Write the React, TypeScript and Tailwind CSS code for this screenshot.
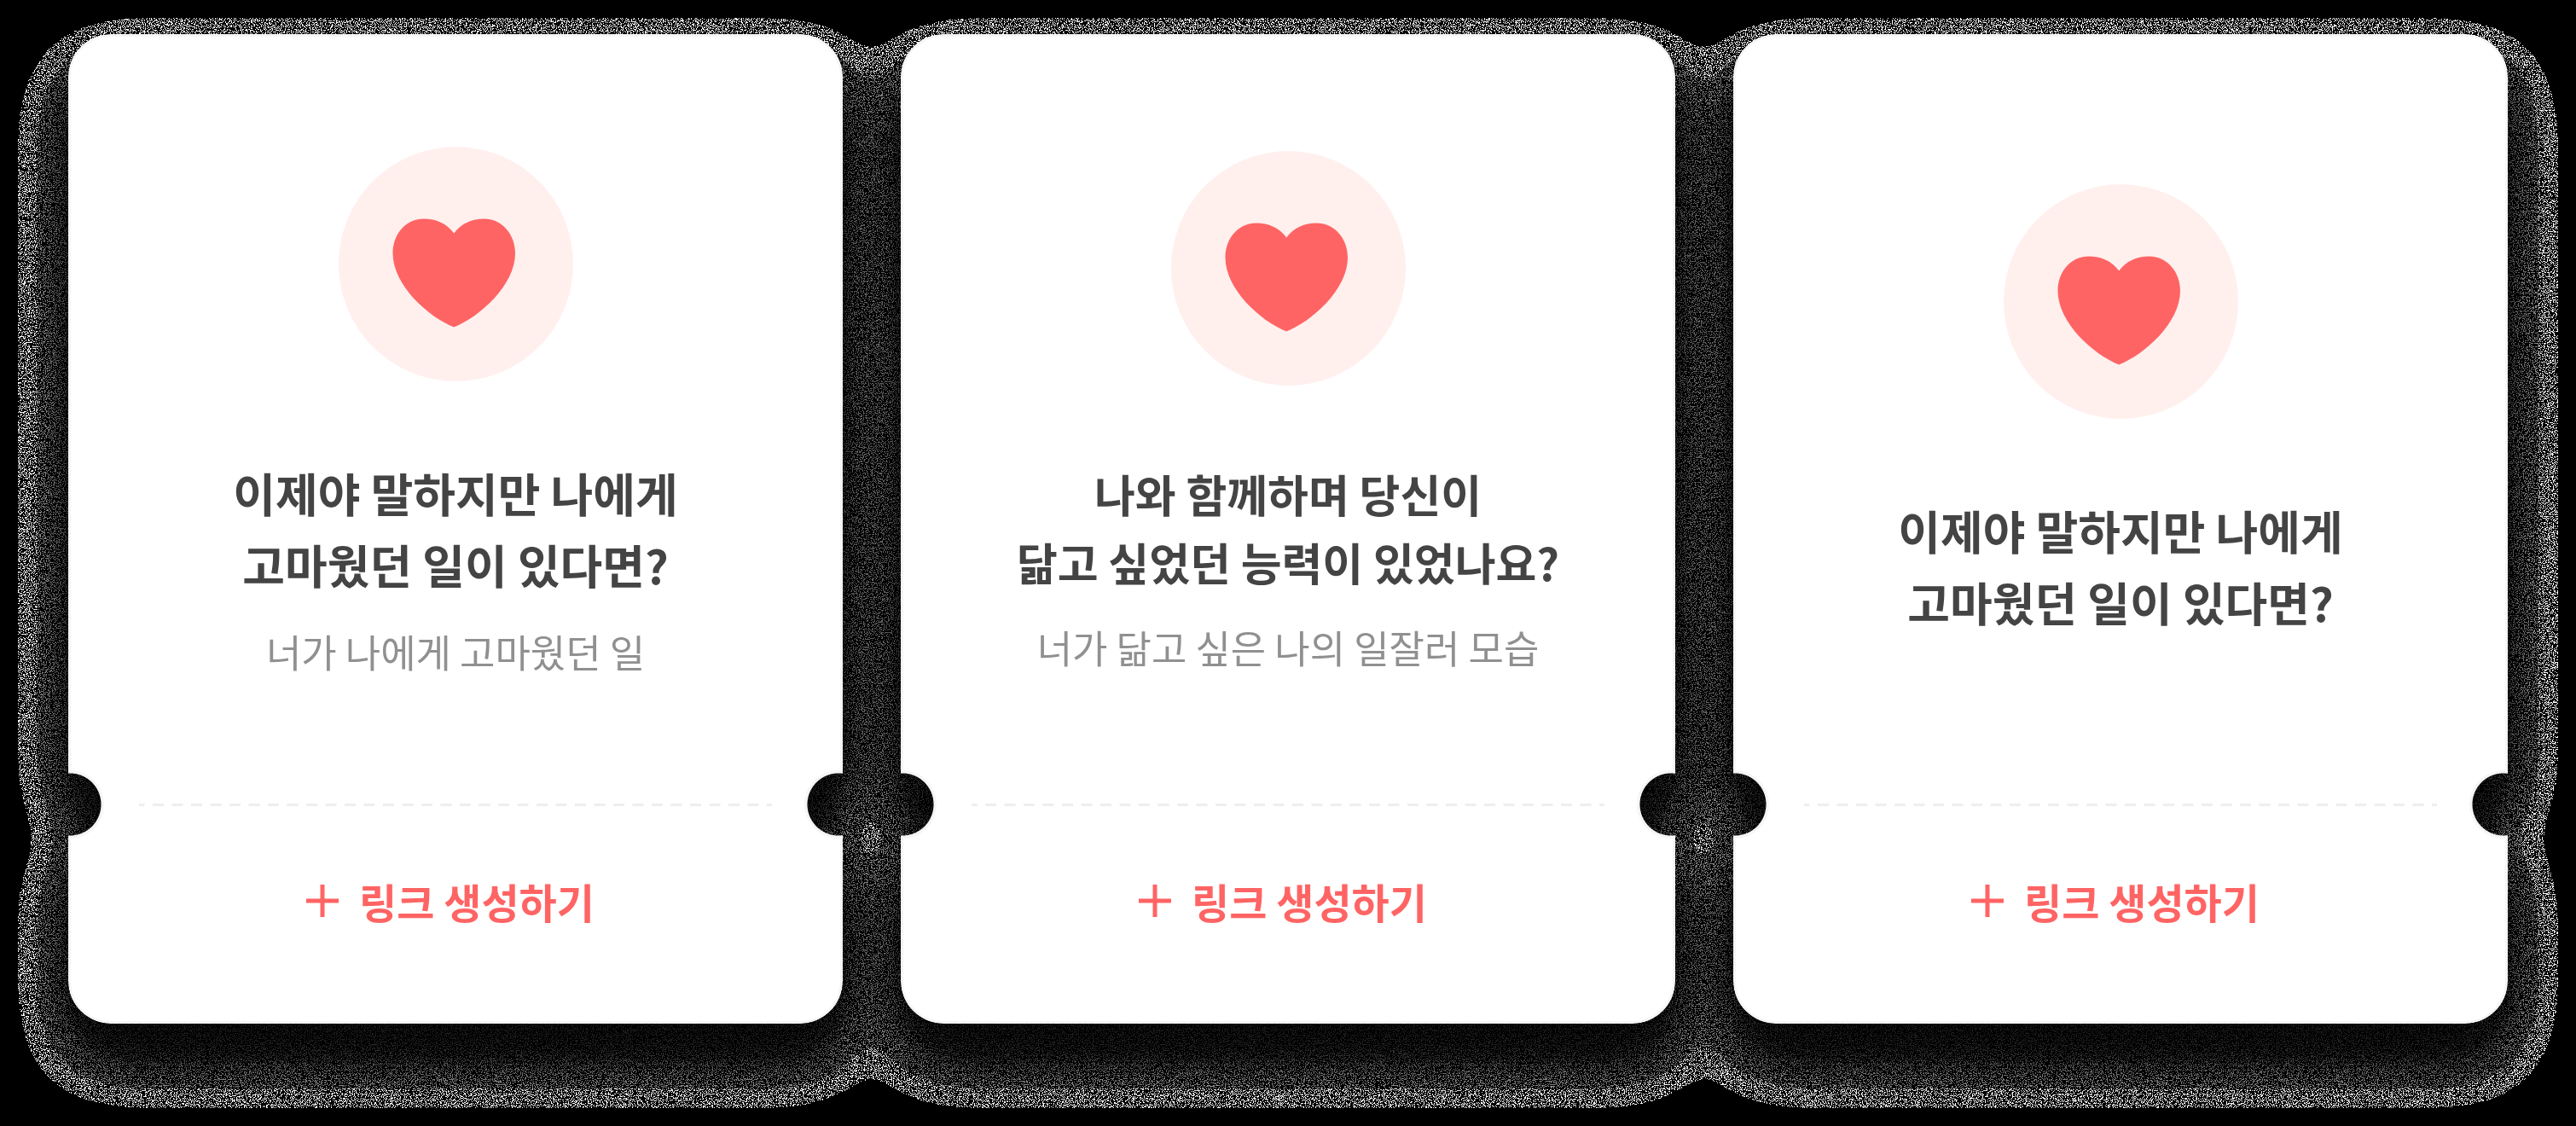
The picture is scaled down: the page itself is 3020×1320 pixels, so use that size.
type Ticket = {
  id: string;
  title: [string, string];
  titleClass: string;
  caption?: string;
};

const tickets: Ticket[] = [
  {
    id: "thanks",
    title: ["이제야 말하지만 나에게", "고마웠던 일이 있다면?"],
    titleClass: "mt-[89px] text-[54px] leading-[84px]",
    caption: "너가 나에게 고마웠던 일",
  },
  {
    id: "ability",
    title: ["나와 함께하며 당신이", "닮고 싶었던 능력이 있었나요?"],
    titleClass: "mt-[87px] text-[52px] leading-[80px]",
    caption: "너가 닮고 싶은 나의 일잘러 모습",
  },
  {
    id: "thanks-short",
    title: ["이제야 말하지만 나에게", "고마웠던 일이 있다면?"],
    titleClass: "mt-[89px] text-[54px] leading-[84px]",
  },
];

/* Soft shadow rendered as speckles that get brighter as the shadow fades out. */
function GrainFilter() {
  return (
    <svg className="absolute size-0" aria-hidden="true">
      <filter
        id="grain"
        x="-5%"
        y="-10%"
        width="110%"
        height="125%"
        colorInterpolationFilters="sRGB"
      >
        <feOffset in="SourceAlpha" dy="40" result="shifted" />
        <feGaussianBlur in="shifted" stdDeviation="35" result="soft" />
        <feComponentTransfer in="soft" result="steps">
          <feFuncA
            type="discrete"
            tableValues="0 1 1 .9 .55 .5 .5 .45 .42 .38 .35 .32 .27 .22 .2 .18 .17 .15 .14 .13 .12 .12 .11 .11 .1 .1 .09 .09"
          />
        </feComponentTransfer>
        <feFlood floodColor="#fff" result="white" />
        <feComposite in="white" in2="steps" operator="in" result="shade" />
        <feTurbulence type="fractalNoise" baseFrequency="0.83" numOctaves="3" seed="7" result="noise" />
        <feComponentTransfer in="noise" result="specks">
          <feFuncA type="discrete" tableValues="0 0 0 0 0 0 0 0 0 0 0 0 0 0 1 1 1 1 1 1 1 1 1 1 1" />
        </feComponentTransfer>
        <feComposite in="shade" in2="specks" operator="in" result="grain" />
        <feMerge>
          <feMergeNode in="grain" />
          <feMergeNode in="SourceGraphic" />
        </feMerge>
      </filter>
    </svg>
  );
}

function HeartBadge() {
  return (
    <svg className="size-[275px]" viewBox="0 0 275 275" aria-hidden="true">
      <circle cx="137.5" cy="137.5" r="137.5" fill="#fff0ee" />
      <path
        d="M135.2 101.5C127 90 114 84.5 100 84.5C79 84.5 63.5 102 63.5 125C63.5 162 105 199.500 135.200 211.500C165.500 199.500 207 162 207 125C207 102 191 84.500 170.500 84.500C156.500 84.500 143.500 90 135.200 101.500Z"
        fill="#ff6464"
      />
    </svg>
  );
}

function PlusIcon() {
  return (
    <svg className="size-[38px]" viewBox="0 0 38 38" aria-hidden="true">
      <path d="M19 0V38M0 19H38" stroke="#ff6464" strokeWidth="5" fill="none" />
    </svg>
  );
}

function Perforation() {
  return (
    <div className="relative flex h-11 items-center px-20">
      <span className="absolute top-1/2 -left-[41px] size-20 -translate-y-1/2 rounded-full bg-[#f5f5f5]" />
      <span className="absolute top-1/2 -right-[38px] size-20 -translate-y-1/2 rounded-full bg-[#f5f5f5]" />
      <svg className="h-[3px] w-full" aria-hidden="true">
        <line x1="0" x2="100%" y1="1.5" y2="1.5" stroke="#eeeeee" strokeWidth="3" strokeDasharray="13 9.5" strokeDashoffset="6.5" />
      </svg>
    </div>
  );
}

function TicketCard({ title, titleClass, caption }: Ticket) {
  return (
    <article className="flex flex-col overflow-hidden rounded-[50px] border-[3px] border-[#f5f5f5] bg-white [mask-image:radial-gradient(circle_at_2px_calc(100%_-_257px),transparent_36px,black_37px),radial-gradient(circle_at_calc(100%_-_5px)_calc(100%_-_257px),transparent_36px,black_37px)] [mask-clip:border-box] [mask-composite:intersect] [mask-origin:border-box]">
      <div className="flex flex-1 flex-col items-center justify-center px-10 pt-[129px] pb-[130px] text-center">
        <HeartBadge />
        <h2 className={`font-bold text-[#444444] ${titleClass}`}>
          {title[0]}
          <br />
          {title[1]}
        </h2>
        {caption && <p className="mt-[33px] text-[45px] leading-[54px] text-[#909090]">{caption}</p>}
      </div>
      <Perforation />
      <div className="flex h-[232px] items-center justify-center pb-[50px]">
        <button type="button" className="flex items-center gap-6 pr-3 text-[48px] leading-[56px] font-bold text-[#ff6464]">
          <PlusIcon />
          링크 생성하기
        </button>
      </div>
    </article>
  );
}

export default function App() {
  return (
    <main className="min-h-screen bg-black font-['Noto_Sans_CJK_KR',sans-serif]">
      <GrainFilter />
      <div className="px-20 pt-10 pb-[120px]">
        <div className="grid grid-cols-3 gap-[68px] [filter:url(#grain)]">
          {tickets.map((ticket) => (
            <TicketCard key={ticket.id} {...ticket} />
          ))}
        </div>
      </div>
    </main>
  );
}
